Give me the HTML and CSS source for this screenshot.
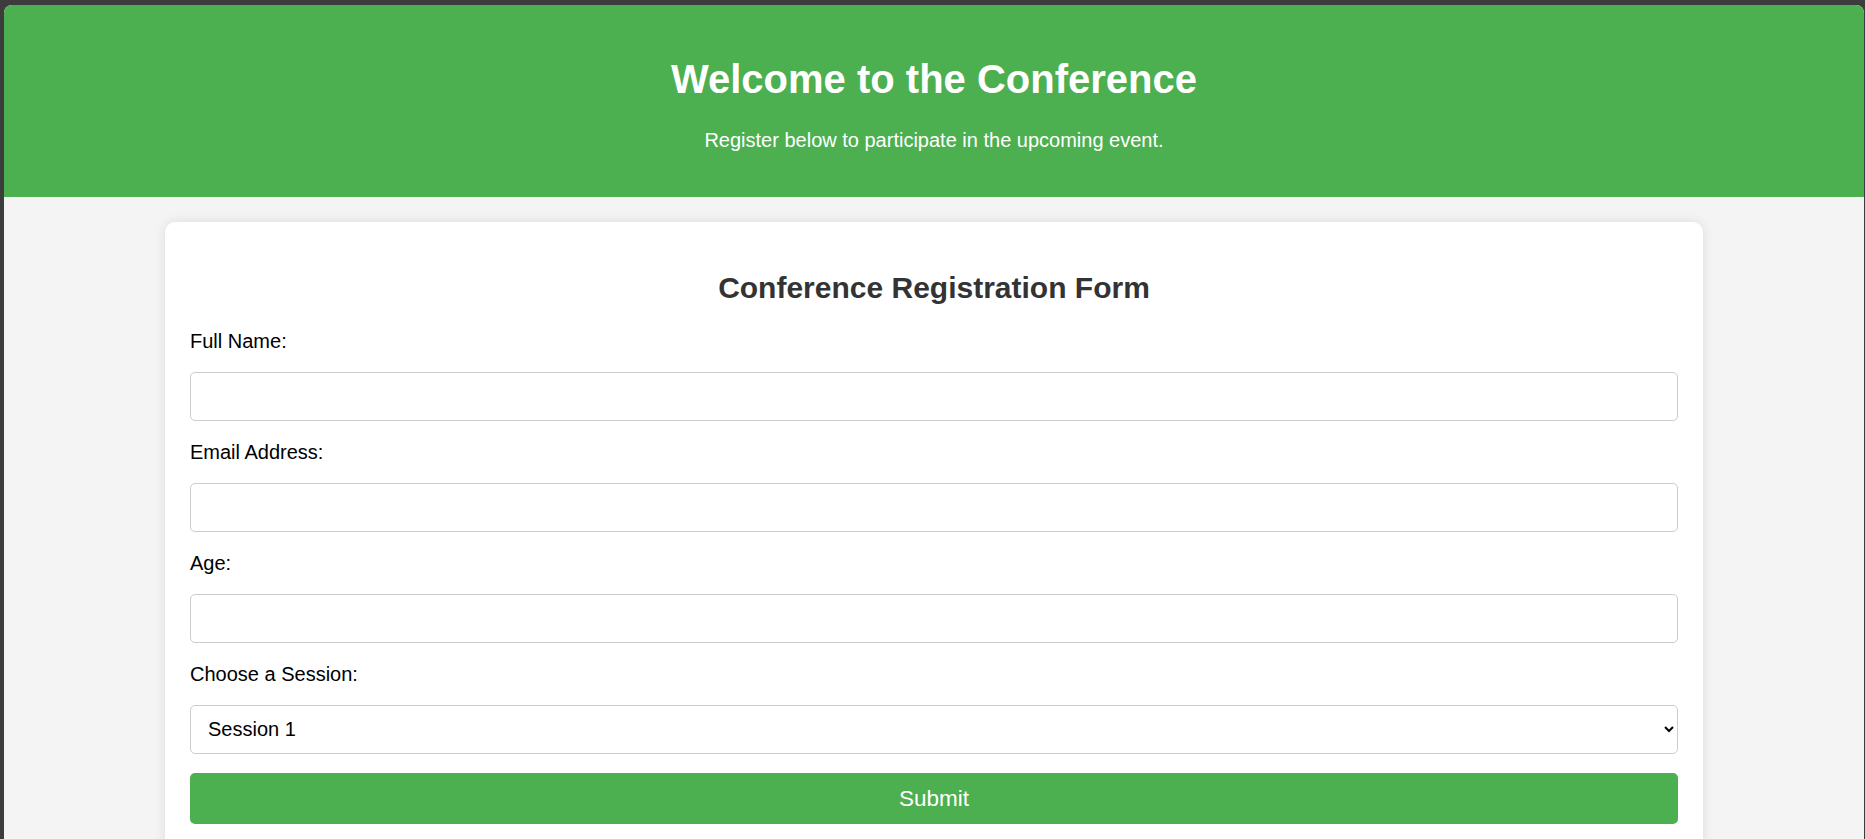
FILE: index.html
```html
<!DOCTYPE html>
<html lang="en">
<head>
<meta charset="utf-8">
<title>Conference Registration</title>
<link rel="stylesheet" href="styles.css">
</head>
<body>
<div class="window">
  <header class="hero">
    <h1 class="hero-title">Welcome to the Conference</h1>
    <p class="hero-sub">Register below to participate in the upcoming event.</p>
  </header>
  <main class="card">
    <h2 class="card-title">Conference Registration Form</h2>
    <form class="form">
      <label class="label" for="name">Full Name:</label>
      <input class="control" type="text" id="name">
      <label class="label" for="email">Email Address:</label>
      <input class="control" type="email" id="email">
      <label class="label" for="age">Age:</label>
      <input class="control" type="number" id="age">
      <label class="label" for="session">Choose a Session:</label>
      <select class="control select" id="session">
        <option>Session 1</option>
        <option>Session 2</option>
        <option>Session 3</option>
      </select>
      <button class="submit" type="button">Submit</button>
    </form>
  </main>
</div>
</body>
</html>
```
FILE: styles.css
```css
html, body {
  margin: 0;
  padding: 0;
}

body {
  background: #3c3c3c;
  font-family: "Liberation Sans", Arial, sans-serif;
}

.window {
  margin: 5px 1px 0 4px;
  min-height: 834px;
  background: #f4f4f4;
  border-radius: 8px 8px 0 0;
  overflow: hidden;
}

.hero {
  background: #4caf50;
  color: #ffffff;
  text-align: center;
  padding: 25px;
}

.hero-title {
  font-size: 40px;
  line-height: 46px;
  font-weight: bold;
  margin: 26.3px 0;
}

.hero-sub {
  font-size: 20px;
  line-height: 23px;
  margin: 20px 0;
}

.card {
  display: block;
  width: 80%;
  margin: 25px auto;
  padding: 24.8px 25px 25px;
  background: #ffffff;
  border-radius: 10px;
  box-shadow: 0 0 12px rgba(0, 0, 0, 0.1);
}

.card-title {
  font-size: 30px;
  line-height: 34.5px;
  font-weight: bold;
  color: #333333;
  text-align: center;
  margin: 24.5px 0;
}

.form {
  display: flex;
  flex-direction: column;
  gap: 19.45px;
}

.label {
  display: block;
  font-size: 20px;
  line-height: 23px;
  color: #000000;
}

.control {
  display: block;
  box-sizing: border-box;
  width: 100%;
  height: 49px;
  margin: 0;
  padding: 0 12.5px;
  border: 1px solid #cccccc;
  border-radius: 5px;
  background: #ffffff;
  font-family: "Liberation Sans", Arial, sans-serif;
  font-size: 20px;
  color: #000000;
}

.select {
  padding-left: 13px;
}

.submit {
  display: block;
  width: 100%;
  height: 51px;
  margin: 0;
  padding: 0;
  border: none;
  border-radius: 5px;
  background: #4caf50;
  color: #ffffff;
  font-family: "Liberation Sans", Arial, sans-serif;
  font-size: 22.5px;
  cursor: pointer;
}
```
